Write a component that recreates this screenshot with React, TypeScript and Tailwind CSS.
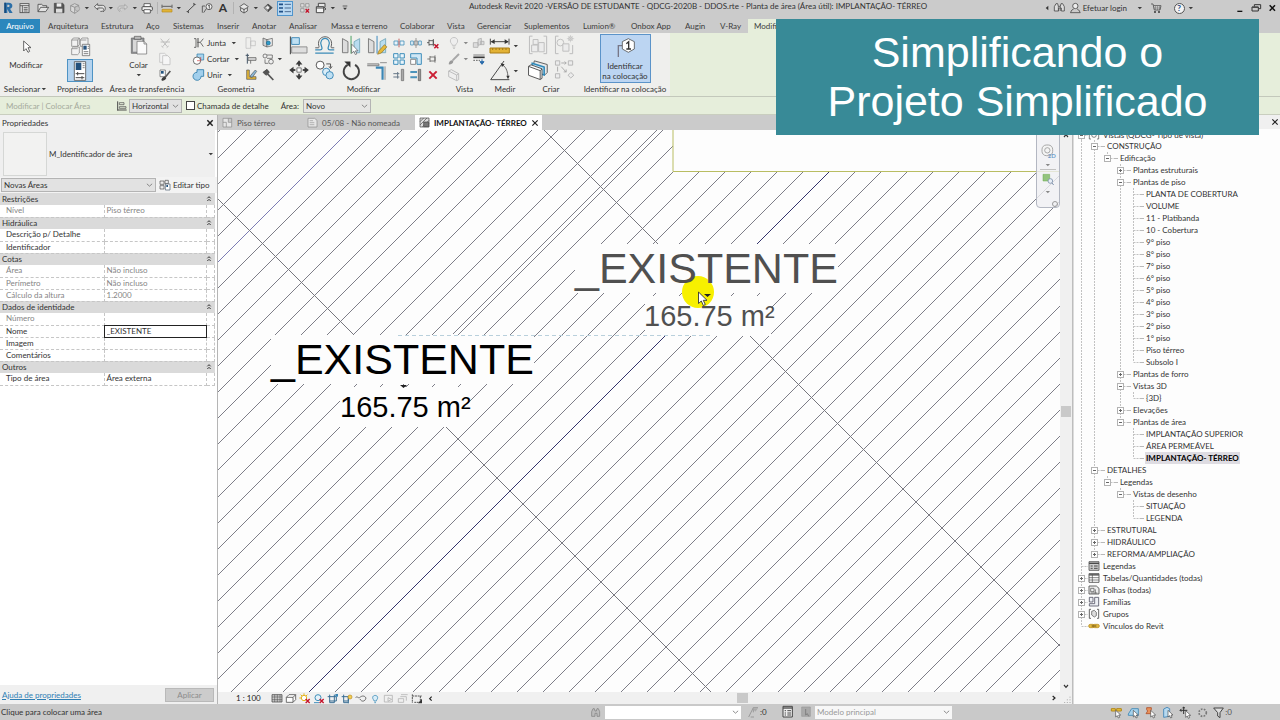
import React from "react";

type Kids = { children?: React.ReactNode };

/* Icon canvas: drawn on a grid three times finer than its pixel size. */
function Ico({ w = 16, h = 16, children }: { w?: number; h?: number } & Kids) {
  return (
    <svg width={w} height={h} viewBox={`0 0 ${w * 3} ${h * 3}`} fill="none" stroke="#4a4a4a" strokeWidth="3" className="block shrink-0" aria-hidden="true">
      {children}
    </svg>
  );
}

function Caret({ light = false }: { light?: boolean }) {
  return (
    <svg width="8" height="8" viewBox="0 0 24 24" className="block shrink-0" aria-hidden="true">
      <path d="M5 9h13l-6.500 7z" fill={light ? "#888" : "#3c3c3c"} />
    </svg>
  );
}

function IconButton({ label, children, className = "" }: { label: string; className?: string } & Kids) {
  return (
    <button type="button" aria-label={label} className={`flex shrink-0 items-center justify-center ${className}`}>
      {children}
    </button>
  );
}

function Chevron() {
  return (
    <svg width="7" height="8" viewBox="0 0 24 24" fill="none" stroke="#666" strokeWidth="2.5" className="pointer-events-none absolute right-[2px] top-1/2 -translate-y-1/2" aria-hidden="true">
      <path d="M3 8l9 8 9-8" />
    </svg>
  );
}

function Combo({ label, value, className = "" }: { label: string; value: string; className?: string }) {
  return (
    <span className={`relative block h-[14px] shrink-0 border border-[#b4b4b4] bg-[#e2e2e2] ${className}`}>
      <select aria-label={label} className="block h-full w-full appearance-none bg-transparent pl-[2px] leading-[12px] outline-none">
        <option>{value}</option>
      </select>
      <Chevron />
    </span>
  );
}

function Close({ bold = false }: { bold?: boolean }) {
  return (
    <Ico w={8} h={8}>
      <path d="M4 4l16 16M20 4L4 20" stroke="#222" strokeWidth={bold ? 4.5 : 3.5} />
    </Ico>
  );
}

/* ---------- Title bar ---------- */

function QuickAccess() {
  return (
    <div className="flex h-full shrink-0 items-center">
      <IconButton label="Revit" className="w-4">
        <Ico>
          <path d="M15 8h11c8 0 11 4 11 9s-3 8-7 9l8 13H28l-6-12v12h-9V8z" fill="#2c6fa8" stroke="none" />
          <path d="M22 14h4c3 0 4 5 0 7h-4z" fill="#cbcbcb" stroke="none" />
          <path d="M13 8h5v31h-5z" fill="#184b7c" stroke="none" />
        </Ico>
      </IconButton>
      <IconButton label="Início" className="w-4">
        <Ico>
          <rect x="12" y="11" width="27" height="27" fill="#e8e8e8" strokeWidth="2.5" />
          <path d="M12 17h27M19 17v21M23 23h12M23 28h12M23 33h12" strokeWidth="2.5" />
        </Ico>
      </IconButton>
      <span className="w-[3px]" />
      <IconButton label="Abrir" className="w-4">
        <Ico>
          <path d="M9 35V13h11l4 4h11v6M9 35l8-13h24l-9 13z" fill="#e2e2e2" strokeWidth="2.5" />
        </Ico>
      </IconButton>
      <IconButton label="Salvar" className="w-4">
        <Ico>
          <path d="M10 10h25l4 4v24H10z" fill="#565656" stroke="#444" strokeWidth="2" />
          <path d="M17 10h14v10H17z" fill="#eee" stroke="none" />
          <path d="M15 26h19v12H15z" fill="#ddd" stroke="none" />
        </Ico>
      </IconButton>
      <IconButton label="Sincronizar" className="w-4">
        <Ico>
          <path d="M11 17l12-6 12 5v16l-12 8-12-7zM11 17l12 5 12-6M23 22v18" fill="#d8d8d8" stroke="#8a8a8a" strokeWidth="2.5" />
          <circle cx="31" cy="26" r="7" fill="#c4c4c4" stroke="#999" strokeWidth="2" />
        </Ico>
      </IconButton>
      <Caret />
      <IconButton label="Desfazer" className="w-4">
        <Ico>
          <path d="M20 11L10 20l10 9v-5h14c5 0 5 8 0 10h-6M20 11v5h14c12 0 11 17 2 19" fill="#e4e4e4" strokeWidth="2.5" />
        </Ico>
      </IconButton>
      <Caret />
      <IconButton label="Refazer" className="w-4">
        <Ico>
          <path d="M29 13l9 8-9 8v-5H18c-5 0-5 7 0 10M29 13v5H17c-11 0-10 14-2 17" fill="#d2d2d2" stroke="#a2a2a2" strokeWidth="2.5" />
        </Ico>
      </IconButton>
      <Caret />
      <IconButton label="Imprimir" className="w-4">
        <Ico>
          <path d="M15 20v-9h19v9" fill="#fff" strokeWidth="2.5" />
          <rect x="9" y="20" width="31" height="12" rx="3" fill="#f0f0f0" strokeWidth="3" />
          <path d="M15 29h19v10H15z" fill="#fff" strokeWidth="2.5" />
        </Ico>
      </IconButton>
      <span className="flex w-1 justify-center"><span className="h-3 w-px bg-[#b2b2b2]" /></span>
      <IconButton label="Medir" className="w-4">
        <Ico>
          <path d="M9 28h30v8H9z" fill="#e0b336" stroke="#b98b1e" strokeWidth="2" />
          <path d="M9 14v10M39 14v10M10 19h28" strokeWidth="2.5" />
        </Ico>
      </IconButton>
      <Caret />
      <IconButton label="Cota alinhada" className="w-4">
        <Ico>
          <path d="M13 35L36 13" strokeWidth="3" />
          <path d="M9 34h9v6zM40 14h-9V8z" fill="#444" stroke="none" />
        </Ico>
      </IconButton>
      <IconButton label="Identificador" className="w-4">
        <Ico>
          <path d="M10 38V18h8" strokeWidth="2.5" />
          <circle cx="30" cy="20" r="9" fill="#eee" strokeWidth="2.5" />
          <path d="M27 18l4-3v11M14 38l8-12" strokeWidth="2.5" />
        </Ico>
      </IconButton>
      <IconButton label="Texto" className="w-4 text-[12px] font-bold leading-4 text-[#333]">A</IconButton>
      <span className="flex w-[5px] justify-center"><span className="h-3 w-px bg-[#b2b2b2]" /></span>
      <IconButton label="Vista 3D" className="w-4">
        <Ico>
          <path d="M11 20l13-9 13 9-3 3v10l-10 6-10-6V23zM14 23l10 6 10-6M24 29v10" fill="#e8e8e8" strokeWidth="2.5" />
        </Ico>
      </IconButton>
      <Caret />
      <IconButton label="Corte" className="w-4">
        <Ico>
          <path d="M12 23l12-11v6h6v10h-6v7z" fill="#f4f4f4" strokeWidth="2.5" />
          <path d="M24 12l13 11-13 12" fill="#444" strokeWidth="2" />
          <circle cx="23" cy="23" r="6" fill="#eee" strokeWidth="2" />
        </Ico>
      </IconButton>
      <span className="w-px" />
      <button type="button" aria-label="Linhas finas" className="flex h-[15px] w-4 shrink-0 items-center justify-center border border-[#4f94cc] bg-[#b9d8f2]">
        <Ico w={14} h={12}>
          <path d="M3 7h12M3 18h12M3 29h12" stroke="#1f4f86" strokeWidth="5" />
          <path d="M20 7h19M20 18h19M20 29h19" strokeWidth="2.5" stroke="#35577f" />
        </Ico>
      </button>
      <span className="w-1" />
      <IconButton label="Fechar janelas inativas" className="w-4">
        <Ico>
          <path d="M11 11h10v10H11zM26 11h10v10H26zM11 26h10v10H11z" fill="#ddd" stroke="#888" strokeWidth="2" />
          <path d="M26 27l10 11M36 27L26 38" stroke="#c4122a" strokeWidth="4" />
        </Ico>
      </IconButton>
      <IconButton label="Alternar janelas" className="w-4">
        <Ico>
          <path d="M16 10h20v12H16z" fill="#e6e6e6" strokeWidth="3" />
          <path d="M10 20h22v18H10z" fill="#f4f4f4" strokeWidth="3" />
          <path d="M10 24h22M34 30l5-3-5-4" strokeWidth="3" />
        </Ico>
      </IconButton>
      <Caret />
      <span className="w-1" />
      <IconButton label="Personalizar" className="w-2">
        <Ico w={8} h={8}>
          <path d="M5 6h14" strokeWidth="2.5" />
          <path d="M6 11h12l-6 7z" fill="#3c3c3c" stroke="none" />
        </Ico>
      </IconButton>
    </div>
  );
}

function TitleBar() {
  return (
    <header className="flex h-[19px] items-start bg-[#cbcbcb] text-[#333]">
      <div className="flex h-4 w-full items-center">
        <QuickAccess />
        <h1 className="min-w-0 flex-1 overflow-hidden pl-[120px] pb-1 whitespace-nowrap">
          Autodesk Revit 2020 -VERSÃO DE ESTUDANTE - QDCG-2020B - DDOS.rte - Planta de área (Área útil): IMPLANTAÇÃO- TÉRREO
        </h1>
        <div className="flex shrink-0 items-center">
          <IconButton label="Recolher" className="w-2">
            <Ico w={8} h={8}><path d="M16 5v14l-8-7z" fill="#333" stroke="none" /></Ico>
          </IconButton>
          <IconButton label="Pesquisar" className="w-4">
            <Ico>
              <path d="M10 33V20l5-9h5l2 8h6l2-8h5l5 9v13h-9v-9h-8v9z" fill="#ddd" strokeWidth="2.5" />
              <path d="M22 19v14M28 19v14" strokeWidth="2" />
            </Ico>
          </IconButton>
          <button type="button" className="flex items-center">
            <Ico>
              <circle cx="25" cy="18" r="8" fill="#eee" strokeWidth="2.5" />
              <path d="M11 38c1-8 7-10 9-11M39 38c-1-8-7-10-9-11M10 38h30" strokeWidth="2.5" />
            </Ico>
            <span>Efetuar login</span>
          </button>
          <span className="w-[9px]" />
          <Caret />
          <span className="w-1" />
          <IconButton label="Loja" className="w-4">
            <Ico>
              <path d="M9 12h6l4 18h17l3-13H17" fill="#e8e8e8" strokeWidth="2.5" />
              <path d="M22 18v12M28 18v12M34 18v12M17 24h20" strokeWidth="1.5" />
              <circle cx="21" cy="36" r="2" fill="#333" /><circle cx="33" cy="36" r="2" fill="#333" />
            </Ico>
          </IconButton>
          <span className="w-[7px]" />
          <IconButton label="Ajuda" className="w-4">
            <span className="flex h-[11px] w-[11px] items-center justify-center rounded-full border border-[#555] bg-[#f2f2f2] font-bold leading-none text-[#1c4587]">?</span>
          </IconButton>
          <Caret />
          <span className="w-[37px]" />
          <IconButton label="Minimizar" className="w-4"><Ico><path d="M16 34h15" stroke="#111" strokeWidth="4" /></Ico></IconButton>
          <IconButton label="Restaurar" className="w-4"><Ico><path d="M19 20v-6h19v12h-6M12 21h19v12H12z" stroke="#333" strokeWidth="3" /><path d="M12 22h19" strokeWidth="4" /></Ico></IconButton>
          <IconButton label="Fechar" className="w-4"><Ico><path d="M17 16l16 16M33 16L17 32" stroke="#111" strokeWidth="4.5" /></Ico></IconButton>
        </div>
      </div>
    </header>
  );
}

/* ---------- Ribbon tabs ---------- */

const TABS: [string, string][] = [
  ["Arquitetura", "w-[53px]"], ["Estrutura", "w-[45px]"], ["Aço", "w-[27px]"], ["Sistemas", "w-[44px]"],
  ["Inserir", "w-[35px]"], ["Anotar", "w-[37px]"], ["Analisar", "w-[42px]"], ["Massa e terreno", "w-[69px]"],
  ["Colaborar", "w-[47px]"], ["Vista", "w-[30px]"], ["Gerenciar", "w-[47px]"], ["Suplementos", "w-[59px]"],
  ["Lumion®", "w-[48px]"], ["Onbox App", "w-[54px]"], ["Augin", "w-[35px]"], ["V-Ray", "w-[28px]"],
];

function RibbonTabs() {
  return (
    <nav className="flex h-[14px] bg-[#cbcbcb] text-[#3c3c3c]">
      <button type="button" className="w-10 shrink-0 bg-[#2b87bd] text-white">Arquivo</button>
      <div className="flex shrink-0 pl-2">
        {TABS.map(([name, w]) => (
          <button key={name} type="button" className={`shrink-0 text-left whitespace-nowrap ${w}`}>{name}</button>
        ))}
      </div>
      <button type="button" className="shrink-0 bg-[#e6eedb] px-[6px] whitespace-nowrap">Modificar | Colocar Área</button>
    </nav>
  );
}

/* ---------- Ribbon ---------- */

function Panel({ title, w, caret = false, children }: { title: string; w: string; caret?: boolean } & Kids) {
  return (
    <section className={`flex h-full shrink-0 flex-col ${w}`}>
      <div className="flex flex-1 justify-center">{children}</div>
      <h2 className="flex h-[14px] items-center justify-center pb-px whitespace-nowrap leading-none">
        {title}{caret && <Caret />}
      </h2>
    </section>
  );
}

function SmallIcon({ label, children }: { label: string } & Kids) {
  return <IconButton label={label} className="h-4 w-[17px]"><Ico w={14} h={14}>{children}</Ico></IconButton>;
}

function BigIcon({ label, children }: { label: string } & Kids) {
  return <IconButton label={label} className="h-[25px] w-[26px]"><Ico w={22} h={22}><g transform="translate(0 -3) scale(0.920)">{children}</g></Ico></IconButton>;
}

function Ribbon() {
  return (
    <div className="flex h-16 border-b border-[#c3c8bb] bg-[#e6eedb] text-[#333]">
      <div className="flex h-full shrink-0 bg-[#efefed]">
        <Panel title="Selecionar" w="w-[52px]" caret>
          <button type="button" className="flex w-full flex-col items-center">
            <Ico w={20} h={26}>
              <path d="M23 24v30l7-7 6 11 5-3-5-11h9z" fill="#fff" strokeWidth="2.5" />
            </Ico>
            <span className="leading-3">Modificar</span>
          </button>
        </Panel>
        <Panel title="Propriedades" w="w-14">
          <div className="flex flex-col items-center">
            <IconButton label="Propriedades de tipo" className="h-[26px] w-[26px]">
              <Ico w={22} h={22}>
                <path d="M8 15l5-6h18v20l-5 5H8zM8 15h18l5-6M26 15v19" fill="#f2f2f2" strokeWidth="2" stroke="#777" />
                <path d="M34 15l5-6h18v20l-5 5H34zM34 15h18" fill="#f2f2f2" strokeWidth="2" stroke="#777" />
                <path d="M8 41l5-5h18v18l-5 5H8zM8 41h18" fill="#f2f2f2" strokeWidth="2" stroke="#777" />
                <path d="M40 28h22v34H40z" fill="#fff" stroke="#555" strokeWidth="2" />
                <path d="M43 32h10v12H43z" fill="#2a557f" stroke="none" />
                <path d="M56 34h4M56 40h4M44 50h14M44 56h14" stroke="#444" strokeWidth="2" />
              </Ico>
            </IconButton>
            <IconButton label="Propriedades" className="h-[23px] w-[26px] border border-[#4e93c4] bg-[#b5d3ee]">
              <Ico w={18} h={20}>
                <path d="M10 2h34v56H10z" fill="#fff" stroke="#555" strokeWidth="2.5" />
                <path d="M14 5h17v22H14z" fill="#22507c" stroke="none" />
                <path d="M35 8h6M35 14h6M35 20h6" strokeWidth="2" />
                <path d="M14 38h26M20 33v10M14 50h26M33 45v10" strokeWidth="3" />
              </Ico>
            </IconButton>
          </div>
        </Panel>
        <Panel title="Área de transferência" w="w-[78px]">
          <button type="button" className="flex w-9 flex-col items-center">
            <Ico w={20} h={26}>
              <path d="M7 15h38v46H7z" fill="#8d8f92" stroke="#666" strokeWidth="2" />
              <path d="M12 20h28v36H12z" fill="#d8d8d8" stroke="none" />
              <path d="M16 10h20v9H16z" fill="#bbb" stroke="#555" strokeWidth="2" />
              <path d="M24 25h21l8 8v30H24z" fill="#fafafa" stroke="#666" strokeWidth="2" />
              <path d="M45 25v8h8" stroke="#666" strokeWidth="2" />
            </Ico>
            <span className="leading-3">Colar</span>
            <Caret />
          </button>
          <div className="flex flex-col pt-[2px]">
            <SmallIcon label="Recortar"><path d="M8 8l20 24M34 8L14 32M8 18h28M10 30l6 5M26 35l6-5" stroke="#b5b5b5" strokeWidth="2.5" /></SmallIcon>
            <SmallIcon label="Copiar"><path d="M5 4h15l7 7v20H5z" fill="#f3f3f3" stroke="#bbb" strokeWidth="2" /><path d="M14 11h15l7 7v20H14z" fill="#f6f6f6" stroke="#b5b5b5" strokeWidth="2" /></SmallIcon>
            <SmallIcon label="Copiar propriedades"><path d="M6 6h16v20H6z" fill="#fff" stroke="#555" strokeWidth="2" /><path d="M9 9h8v8H9z" fill="#23547f" stroke="none" /><path d="M12 36c2-6 8-8 11-10L37 9" stroke="#555" strokeWidth="5" /><path d="M11 38c0-8 6-11 11-11l3 3c-3 6-8 9-14 8z" fill="#3c3c3c" stroke="none" /></SmallIcon>
          </div>
        </Panel>
        <Panel title="Geometria" w="w-[100px]">
          <div className="flex w-full flex-col pl-[6px] pt-[2px]">
            <div className="flex h-4 items-center">
              <button type="button" className="flex w-[46px] items-center">
                <Ico w={14} h={14}><path d="M6 8h6v26H6M34 8l-9 11h-9M25 19l9 13" stroke="#555" strokeWidth="2.5" /><path d="M18 6v28" strokeWidth="3" /></Ico>
                <span className="pl-px">Junta</span><span className="w-1" /><Caret />
              </button>
              <span className="w-1" />
              <SmallIcon label="Adicionar recorte"><path d="M6 5h14v32H6zM20 15h14v14H20z" stroke="#bbb" strokeWidth="2" /></SmallIcon>
              <SmallIcon label="Dividir face"><path d="M6 6l12 5v22L6 28z" fill="#d0d0d0" stroke="#555" strokeWidth="2" /><path d="M18 11l16-4v22l-16 4z" fill="#eee" stroke="#555" strokeWidth="2" /><circle cx="22" cy="21" r="6" fill="#2f9bc8" stroke="#1c6a91" strokeWidth="2" /></SmallIcon>
            </div>
            <div className="flex h-4 items-center">
              <button type="button" className="flex w-[50px] items-center">
                <Ico w={14} h={14}><path d="M15 6h20v18H15z" fill="#a9d4ee" stroke="#2b7aa8" strokeWidth="2" /><circle cx="15" cy="26" r="11" fill="#fff" stroke="#555" strokeWidth="2.5" /><path d="M15 26h11V15" stroke="#c44" strokeWidth="2" /></Ico>
                <span className="pl-px">Cortar</span><span className="w-1" /><Caret />
              </button>
              <SmallIcon label="Vigas"><path d="M12 17h24v8H12zM20 25v10" fill="#ddd" stroke="#666" strokeWidth="2.5" /><path d="M10 5v30M5 10h10" stroke="#456" strokeWidth="3" /></SmallIcon>
              <SmallIcon label="Pintar"><circle cx="12" cy="12" r="6" fill="#eee" strokeWidth="2" /><path d="M18 9h16v10H18M12 22v12h10" strokeWidth="2" /><circle cx="30" cy="29" r="7" fill="#eee" strokeWidth="2" /></SmallIcon>
              <Caret />
            </div>
            <div className="flex h-4 items-center">
              <button type="button" className="flex w-[46px] items-center">
                <Ico w={14} h={14}><path d="M15 5h20v20h-8c0 8-6 12-11 12-8 0-13-6-13-12 0-7 5-12 12-12z" fill="#a2cfec" stroke="#2b7aa8" strokeWidth="2.5" /></Ico>
                <span className="pl-px">Unir</span><span className="w-1" /><Caret />
              </button>
              <span className="w-1" />
              <SmallIcon label="Juntas de parede"><path d="M8 6v28h28v-8H16V6z" fill="#e0b336" stroke="#555" strokeWidth="2" /><path d="M34 6L20 22v6h5L38 10z" fill="#8ab8d8" stroke="#555" strokeWidth="2" /></SmallIcon>
              <SmallIcon label="Demolir"><path d="M6 13L18 4l7 9-10 9z" fill="#555" stroke="#333" strokeWidth="2" /><path d="M19 17l18 19" stroke="#555" strokeWidth="5" /></SmallIcon>
            </div>
          </div>
        </Panel>
        <Panel title="Modificar" w="w-[155px]">
          <div className="grid grid-cols-[repeat(4,26px)] grid-rows-[repeat(2,25px)] content-start">
            <BigIcon label="Alinhar"><path d="M8 8v58" strokeWidth="4" stroke="#555" /><path d="M12 12h25v22H12z" fill="#bfe0f3" stroke="#3a86b5" strokeWidth="3" /><path d="M12 42h50v20H12z" fill="#dedede" stroke="#8a8a8a" strokeWidth="3" /></BigIcon>
            <BigIcon label="Deslocar"><path d="M4 62h60M4 52h16c9 0 6-9 4-14-6-15 4-24 12-24s18 9 12 24c-2 5-5 14 4 14h14" stroke="#3c8cb8" strokeWidth="4" /><path d="M4 45h10c4 0 2-6 1-9-5-36 47-36 42 0-1 4-3 9 1 9h8" stroke="#555" strokeWidth="3" /></BigIcon>
            <BigIcon label="Espelhar - Selecionar eixo"><path d="M8 15l18 10v36H8z" fill="#ddd" stroke="#777" strokeWidth="3" /><path d="M36 6v58" stroke="#3d9b55" strokeWidth="3" /><path d="M64 15L46 25v36h18z" fill="#b9dcef" stroke="#7ab" strokeWidth="3" /><path d="M38 33v30l7-7 5 11 5-2-5-10h9z" fill="#fff" strokeWidth="2" /></BigIcon>
            <BigIcon label="Espelhar - Desenhar eixo"><path d="M8 15l18 10v36H8z" fill="#ddd" stroke="#777" strokeWidth="3" /><path d="M36 6v58" stroke="#2d7fb8" strokeWidth="3" /><path d="M64 15L46 25v36h18z" fill="#b9dcef" stroke="#7ab" strokeWidth="3" /><path d="M38 66l4-11 18-20 8 7-18 20z" fill="#e5b93c" stroke="#8a6a1d" strokeWidth="2" /></BigIcon>
            <BigIcon label="Mover"><path d="M36 24V12M36 48v12M24 36H12M48 36h12" strokeWidth="6" /><path d="M36 4l11 14H25zM36 68l11-14H25zM4 36l14-11v22zM68 36L54 25v22z" fill="#3b3b3b" stroke="none" /><path d="M29 29h14v14H29z" fill="#fff" stroke="#555" strokeWidth="2.5" /></BigIcon>
            <BigIcon label="Copiar"><circle cx="20" cy="20" r="13" fill="#fff" strokeWidth="3" /><path d="M40 16h14v12M49 24l5 7 5-7" strokeWidth="3" /><circle cx="40" cy="42" r="12" fill="#d9edf8" stroke="#3a86b5" strokeWidth="3" /><circle cx="51" cy="53" r="12" fill="#bfe0f3" stroke="#3a86b5" strokeWidth="3" /></BigIcon>
            <BigIcon label="Rotacionar"><path d="M25 19a25 25 0 1 0 24 0" stroke="#444" strokeWidth="6" /><path d="M14 8h20v20z" fill="#333" stroke="none" /></BigIcon>
            <BigIcon label="Aparar/Estender"><path d="M4 16h38v6H4" stroke="#777" fill="#ddd" strokeWidth="3" /><path d="M32 28h22v40" stroke="#3a86b5" strokeWidth="7" /><path d="M62 24v44M46 12h22" stroke="#888" strokeWidth="3" /></BigIcon>
          </div>
          <div className="grid grid-cols-[repeat(3,17px)] grid-rows-[repeat(3,16px)] content-start pt-[2px]">
            <SmallIcon label="Dividir"><path d="M6 15h12v12H6zM24 15h12v12H24z" fill="#e8f3fa" stroke="#4b93bb" strokeWidth="2.5" /><path d="M21 8v26" stroke="#b44" strokeWidth="2.5" /></SmallIcon>
            <SmallIcon label="Dividir com folga"><path d="M5 15h8v12H5zM29 15h8v12h-8z" fill="#e8f3fa" stroke="#4b93bb" strokeWidth="2.5" /><path d="M21 6v30M16 15h10v12H16z" strokeWidth="2.5" stroke="#888" /></SmallIcon>
            <SmallIcon label="Desafixar"><path d="M9 11v18M9 20H3M9 14h13v12H9M22 9v22" strokeWidth="2.5" /><path d="M25 25l12 12M37 25L25 37" stroke="#c4122a" strokeWidth="4.5" /></SmallIcon>
            <SmallIcon label="Matriz"><path d="M5 5h13v13H5zM24 5h13v13H24zM5 24h13v13H5zM24 24h13v13H24z" fill="#eaf5fb" stroke="#3f8fbb" strokeWidth="3" /></SmallIcon>
            <SmallIcon label="Escala"><path d="M5 5h32v32H24V18H5z" fill="#cfe7f5" stroke="#3f8fbb" strokeWidth="3" /><path d="M5 22h15v15H5z" fill="#fff" stroke="#777" strokeWidth="2.5" /></SmallIcon>
            <SmallIcon label="Fixar"><path d="M12 12v18M12 21H4M12 15h15v12H12M27 10v22" strokeWidth="2.5" stroke="#666" /></SmallIcon>
            <SmallIcon label="Aparar único"><path d="M4 17h18M4 27h18M17 12v20" strokeWidth="3" stroke="#678" /><path d="M28 4h7v34h-7z" fill="#aaa" stroke="#666" strokeWidth="2" /></SmallIcon>
            <SmallIcon label="Aparar múltiplos"><path d="M4 12h20M4 28h20" strokeWidth="6" stroke="#4b93bb" /><path d="M28 4h7v34h-7z" fill="#999" stroke="#555" strokeWidth="2" /></SmallIcon>
            <SmallIcon label="Excluir"><path d="M10 10l22 22M32 10L10 32" stroke="#cb1f34" strokeWidth="6" /></SmallIcon>
          </div>
        </Panel>
        <Panel title="Vista" w="w-[47px]">
          <div className="flex w-full flex-col pl-1 pt-[2px]">
            <div className="flex h-4 items-center">
              <SmallIcon label="Ocultar"><path d="M16 28c0-5-6-6-6-13 0-14 22-14 22 0 0 7-6 8-6 13zM17 33h8M18 37h6" fill="#eee" stroke="#bdbdbd" strokeWidth="2.5" /></SmallIcon>
              <Caret light />
              <SmallIcon label="Deslocar elementos"><path d="M4 20h14v14H4zM18 10l10-3v18l-10 3zM26 16h10v10H26z" fill="#ddd" stroke="#b0b0b0" strokeWidth="2.5" /></SmallIcon>
            </div>
            <div className="flex h-4 items-center">
              <SmallIcon label="Substituir gráficos"><path d="M17 25L36 6" stroke="#a8a8a8" strokeWidth="6" /><path d="M5 37c1-9 6-13 12-12l2 4c-2 6-8 9-14 8z" fill="#999" stroke="none" /></SmallIcon>
              <Caret light />
              <SmallIcon label="Trabalho de linha"><path d="M4 9h34" strokeWidth="2" /><path d="M4 16h34" strokeWidth="5" stroke="#333" /><path d="M4 25h20" strokeDasharray="5 3" strokeWidth="2.5" /><path d="M30 22v10M24 29l6 8 6-8z" stroke="#2b6cab" fill="#2b6cab" strokeWidth="3" /></SmallIcon>
            </div>
            <SmallIcon label="Caixa de seleção"><path d="M5 9l8-4 22 12v18l-6 3L5 26zM5 9l24 12v17M29 21l6-4" fill="#eee" stroke="#b5b5b5" strokeWidth="2.5" /></SmallIcon>
          </div>
        </Panel>
        <Panel title="Medir" w="w-[34px]">
          <div className="flex w-full flex-col">
            <button type="button" aria-label="Medir distância" className="flex h-[25px] items-center">
              <Ico w={24} h={24}><path d="M7 14v18M63 14v18M10 23h50" strokeWidth="3" /><path d="M8 23l12-7v14zM62 23l-12-7v14z" fill="#333" stroke="none" /><path d="M6 42h58v15H6z" fill="#e3b234" stroke="#a97d16" strokeWidth="3" /><path d="M14 43v5M24 43v5M34 43v5M44 43v5M54 43v5" stroke="#7a5a10" strokeWidth="2" /></Ico>
              <Caret />
            </button>
            <button type="button" aria-label="Cota angular" className="flex h-[25px] items-center">
              <Ico w={24} h={24}><path d="M48 6L8 62h56" strokeWidth="3" /><path d="M44 18c12 8 15 22 16 36" strokeWidth="2.500" /><path d="M38 13l12 3-8 8zM60 61l-5-11h10z" fill="#333" stroke="none" /></Ico>
              <Caret />
            </button>
          </div>
        </Panel>
        <Panel title="Criar" w="w-[58px]">
          <div className="grid grid-cols-[repeat(2,26px)] grid-rows-[repeat(2,25px)] content-start">
            <BigIcon label="Criar montagem"><path d="M18 7H8v57h10M54 7h10v57H54" stroke="#b9b9b9" strokeWidth="3" /><path d="M20 18h16v16H20zM15 36h20v22H15zM38 28h18v30H38z" fill="#ececec" stroke="#bdbdbd" strokeWidth="3" /></BigIcon>
            <BigIcon label="Criar peças"><path d="M18 7H8v57h10M54 64h10V36" stroke="#b9b9b9" strokeWidth="3" /><circle cx="24" cy="28" r="11" stroke="#bdbdbd" strokeWidth="3" /><path d="M32 32h20v24H32z" fill="#ececec" stroke="#bdbdbd" strokeWidth="3" /><circle cx="57" cy="15" r="6" stroke="#bbb" strokeWidth="3" /><path d="M57 3v24M45 15h24M49 7l16 16M65 7L49 23" stroke="#c4c4c4" strokeWidth="2" /></BigIcon>
            <BigIcon label="Criar grupo"><path d="M24 6l42 12v26l-8 8-42-14z" fill="#e8e8e8" stroke="#555" strokeWidth="3" /><path d="M17 14l39 12v26L14 40z" fill="#bfe0f3" stroke="#2e88b8" strokeWidth="5" /><path d="M5 24l8-5 36 13v31l-6 4L5 53z" fill="#fff" stroke="#4a4a4a" strokeWidth="3" /><path d="M5 24l38 14v28M43 38l6-5" strokeWidth="3" /></BigIcon>
            <BigIcon label="Criar similar"><path d="M8 6h14v14H8zM50 6h14v14H50zM8 48h14v14H8zM58 44l10 9-10 9-9-9z" fill="#ececec" stroke="#b4b4b4" strokeWidth="3" /><path d="M27 13h16M38 8l5 5-5 5M15 25v16M27 25l16 18M35 42h8v-8" stroke="#a8a8a8" strokeWidth="3" /></BigIcon>
          </div>
        </Panel>
        <Panel title="Identificar na colocação" w="w-[90px]">
          <button type="button" aria-pressed="true" className="mt-px flex h-[49px] w-[51px] flex-col items-center border border-[#5b93c9] bg-[#bcd5f2]">
            <Ico w={24} h={26}>
              <path d="M16 66V32h12" strokeWidth="4" stroke="#778" />
              <path d="M46 11l18 9v22L46 52 28 42V20z" fill="#fff" stroke="#555" strokeWidth="2.500" />
              <path d="M40 26l7-6v22M40 42h14" stroke="#333" strokeWidth="4" />
            </Ico>
            <span className="leading-[10px]">Identificar<br />na colocação</span>
          </button>
        </Panel>
      </div>
    </div>
  );
}

function OptionsBar() {
  return (
    <div className="flex h-[18px] items-center border-b border-[#c9cebf] bg-[#e6eedb] text-[#333]">
      <span className="w-[116px] shrink-0 pl-[6px] whitespace-nowrap text-[#a5aa9c]">Modificar | Colocar Área</span>
      <Ico w={12} h={12}><path d="M5 4v28M5 30h27" strokeWidth="3" /><path d="M10 8h14v6H10zM10 20h20v5H10z" strokeWidth="2" /></Ico>
      <span className="w-px" />
      <Combo label="Orientação" value="Horizontal" className="w-[53px]" />
      <label className="flex items-center gap-[2px] pl-1">
        <input type="checkbox" className="h-[9px] w-[9px] appearance-none border border-[#444] bg-white" />
        Chamada de detalhe
      </label>
      <label htmlFor="area" className="pl-3">Área:</label>
      <span className="relative ml-1 block h-[14px] w-[68px] shrink-0 border border-[#b4b4b4] bg-[#e6e6e4]">
        <select id="area" className="block h-full w-full appearance-none bg-transparent pl-[2px] leading-[12px] outline-none">
          <option>Novo</option>
        </select>
        <Chevron />
      </span>
    </div>
  );
}

/* ---------- Properties ---------- */

type Group = { title: string; rows: { name: string; value?: string; off?: boolean; edit?: boolean }[] };

const GROUPS: Group[] = [
  { title: "Restrições", rows: [{ name: "Nível", value: "Piso térreo", off: true }] },
  { title: "Hidráulica", rows: [{ name: "Descrição p/ Detalhe" }, { name: "Identificador" }] },
  { title: "Cotas", rows: [
    { name: "Área", value: "Não incluso", off: true },
    { name: "Perímetro", value: "Não incluso", off: true },
    { name: "Cálculo da altura", value: "1.2000", off: true },
  ] },
  { title: "Dados de identidade", rows: [
    { name: "Número", off: true },
    { name: "Nome", value: "_EXISTENTE", edit: true },
    { name: "Imagem" },
    { name: "Comentários" },
  ] },
  { title: "Outros", rows: [{ name: "Tipo de área", value: "Área externa" }] },
];

function Properties() {
  return (
    <aside className="flex w-[218px] shrink-0 flex-col border-r border-[#b5b5b5] bg-white text-[#333]">
      <div className="flex h-[15px] shrink-0 items-center justify-between bg-[#f0f0f0] pl-[2px] pr-[3px]">
        <h2>Propriedades</h2>
        <IconButton label="Fechar propriedades"><Close bold /></IconButton>
      </div>
      <button type="button" className="mr-[2px] flex h-[47px] shrink-0 items-center bg-[#efefef] pl-[3px] text-left">
        <span className="h-[44px] w-[44px] border border-[#d5d7d5] bg-[#f2f2f1]" />
        <span className="flex-1 pl-[2px]">M_Identificador de área</span>
        <Caret />
      </button>
      <div className="flex h-4 shrink-0 items-center bg-[#f3f3f3] pl-px">
        <Combo label="Seleção" value="Novas Áreas" className="w-[155px]" />
        <button type="button" className="flex items-center gap-[2px] pl-[3px]">
          <Ico w={12} h={12}>
            <path d="M3 6h12v10H3zM18 4h10v10H18zM3 20h12v10H3z" fill="#eee" strokeWidth="2" />
            <path d="M19 15h14v18H19z" fill="#fff" stroke="#456" strokeWidth="2" />
            <path d="M22 18h5v6h-5z" fill="#23547f" stroke="none" />
          </Ico>
          Editar tipo
        </button>
      </div>
      <table className="mr-[2px] table-fixed border-collapse">
        <colgroup><col className="w-[104px]" /><col className="w-[102px]" /><col /></colgroup>
        {GROUPS.map((g) => (
          <tbody key={g.title}>
            <tr className="h-3 bg-[#dadada]">
              <th colSpan={2} className="h-3 p-0 pl-[2px] text-left font-normal leading-[11px]">{g.title}</th>
              <td className="h-3 p-0">
                <Ico w={7} h={10}><path d="M4 13l5-5 5 5M4 21l5-5 5 5" strokeWidth="3" stroke="#333" /></Ico>
              </td>
            </tr>
            {g.rows.map((r) => (
              <tr key={r.name} className={`h-3 ${r.off ? "text-[#858585]" : ""}`}>
                <td className="h-3 overflow-hidden border-b border-r border-dashed border-[#c6c6c6] p-0 pl-[6px] leading-[11px] whitespace-nowrap">{r.name}</td>
                <td className="h-3 border-b border-r border-dashed border-[#c6c6c6] p-0 leading-[11px]">
                  {r.edit ? (
                    <input aria-label={r.name} defaultValue={r.value} className="block h-[11px] w-full bg-white p-0 pl-[2px] leading-[11px] outline outline-1 outline-[#222]" />
                  ) : (
                    <span className="pl-[2px]">{r.value}</span>
                  )}
                </td>
                <td className="h-3 border-b border-r border-dashed border-[#c6c6c6] p-0" />
              </tr>
            ))}
          </tbody>
        ))}
      </table>
      <div className="flex-1" />
      <div className="flex h-[19px] shrink-0 items-center justify-between bg-[#f0f0f0] pl-[2px] pr-[3px]">
        <a href="#ajuda" className="text-[#2f7fb5] underline">Ajuda de propriedades</a>
        <button type="button" disabled className="h-[14px] w-[49px] border border-[#b9b9b9] bg-[#cccccc] text-[#8b8b8b]">Aplicar</button>
      </div>
    </aside>
  );
}

/* ---------- Drawing view ---------- */

function ViewTabs() {
  return (
    <div className="flex h-[15px] shrink-0 items-center bg-[#cbcbcb] text-[#555]">
      <button type="button" className="flex w-[83px] items-center gap-1 pl-1">
        <Ico w={11} h={11}><path d="M3 4h16v12h10v14H3z" fill="#e6e6e6" stroke="#888" strokeWidth="2" /><path d="M3 16h10v14M19 4h10v12" stroke="#888" strokeWidth="2" /></Ico>
        Piso térreo
      </button>
      <button type="button" className="flex w-[114px] items-center gap-1 pl-[6px]">
        <Ico w={11} h={11}><path d="M3 4h20l7 6v20H3z" fill="#e6e6e6" stroke="#888" strokeWidth="2" /><path d="M8 11h10M8 17h14M8 23h14" stroke="#999" strokeWidth="2" /></Ico>
        05/08 - Não nomeada
      </button>
      <div className="flex h-full items-center bg-white pl-1 pr-[3px] text-[#111]">
        <button type="button" className="flex items-center gap-1 font-bold whitespace-nowrap">
          <Ico w={11} h={11}><path d="M3 3h27v27H3z" fill="#ddd" stroke="#444" strokeWidth="2" /><path d="M3 14L14 3M3 24L24 3M10 30L30 10M19 30l11-11" strokeWidth="2" /><path d="M14 15h15v14H14z" fill="#777" stroke="#444" strokeWidth="2" /></Ico>
          IMPLANTAÇÃO- TÉRREO
        </button>
        <span className="w-1" />
        <IconButton label="Fechar vista"><Close /></IconButton>
      </div>
    </div>
  );
}

const HATCH_STEP = 26.04;
const DARK_LINE = 24;
const HATCH = Array.from({ length: 72 }, (_, i) => Math.round(376 + (i - 1) * HATCH_STEP));

function AreaTag({ x, y, color }: { x: number; y: number; color: string }) {
  return (
    <g fill={color} stroke="none" style={{ fontFamily: '"Liberation Sans", Arial, sans-serif' }}>
      <text x={x} y={y} fontSize="43">_EXISTENTE</text>
      <text x={x + 69} y={y + 43} fontSize="29">165.75 m²</text>
    </g>
  );
}

function Drawing() {
  return (
    <div className="relative min-h-0 min-w-0 flex-1 overflow-hidden bg-[#fdfdfd]">
      <svg className="absolute inset-0 h-full w-full" role="img" aria-label="Planta de área">
        <g transform="translate(-218 -130)" fill="none">
          <g stroke="#7e7e88" strokeWidth="1" shapeRendering="crispEdges">
            {HATCH.map((c, i) => (
              <path key={c} d={`M${c - 100} 100L${c - 1000} 1000`} stroke={i === DARK_LINE + 1 ? "#34346c" : i === 5 ? "#7c7cb4" : undefined} />
            ))}
            <path d="M453 334L660 127" />
            <path d="M180 161L1180 1161M500 86L1500 1086" stroke="#77777e" />
          </g>
          <path d="M673 100h1200v71.500H673z" fill="#fdfdfd" stroke="#b9bd62" strokeWidth="1" />
          <g fill="#fdfdfd">
            <rect x="271" y="335" width="263" height="49" />
            <rect x="340" y="387" width="128" height="40" />
            <rect x="575" y="244" width="263" height="49" />
            <rect x="645" y="296" width="126" height="40" />
          </g>
          <path d="M398 335.500H713" stroke="#b9d0dc" strokeDasharray="4 3" />
          <circle cx="698" cy="292" r="16" fill="#f7f000" />
          <AreaTag x={271} y={374} color="#000" />
          <AreaTag x={575} y={283} color="#505050" />
          <path d="M400 385h7l-3.500 3zM704 294h7l-3.500 3z" fill="#222" />
          <path d="M698.500 292v11.500l2.800-2.500 2 4.500 2-1-2-4.200h3.700z" fill="#fff" stroke="#333" strokeWidth="0.900" />
        </g>
      </svg>
      <div className="absolute right-0 top-0 flex h-[78px] w-6 flex-col items-center rounded-b border border-[#b3b7c2] bg-[#efeff2]/80 pt-3">
        <IconButton label="Roda de navegação 2D" className="h-[18px]">
          <Ico w={18} h={18}>
            <rect x="9" y="6" width="32" height="32" rx="13" fill="#f4f4f4" stroke="#999" strokeWidth="2.500" />
            <circle cx="25" cy="22" r="8" stroke="#999" strokeWidth="2.500" />
            <text x="26" y="46" fontSize="18" fontWeight="bold" fill="#6d9cc8" stroke="none">2D</text>
          </Ico>
        </IconButton>
        <Caret light />
        <span className="h-px w-4 bg-[#c2c2c2]" />
        <IconButton label="Zoom na região" className="h-[18px]">
          <Ico w={16} h={16}>
            <path d="M9 10h20v20H9z" fill="#93c47d" stroke="#6aa84f" strokeWidth="1.500" />
            <circle cx="31" cy="30" r="7" fill="#e8eef6" stroke="#7f93ad" strokeWidth="2.500" />
            <path d="M36 36l5 6" stroke="#7f93ad" />
          </Ico>
        </IconButton>
        <Caret light />
        <span className="mr-px mt-auto h-[6px] w-[6px] self-end rounded-full border border-[#999]" />
      </div>
    </div>
  );
}

function SmallView({ label, children }: { label: string } & Kids) {
  return <IconButton label={label} className="w-[14px]"><Ico w={12} h={11}>{children}</Ico></IconButton>;
}

function ViewControls() {
  return (
    <div className="flex h-3 shrink-0 items-center bg-[#f0f0f0]">
      <button type="button" className="w-[52px] pl-[18px] text-left whitespace-nowrap text-[#222]">1 : 100</button>
      <div className="flex">
        <SmallView label="Nível de detalhe"><path d="M3 5h30v22H3z" fill="#ccc" stroke="#333" strokeWidth="2" /><path d="M3 12h30M3 20h30M11 5v22M19 5v22M27 5v22" stroke="#444" strokeWidth="1.500" /></SmallView>
        <SmallView label="Estilo visual"><path d="M4 13h20v15H4zM4 13l8-8h20l-8 8M32 5v15l-8 8" fill="#fff" stroke="#555" strokeWidth="2.500" /></SmallView>
        <SmallView label="Caminho do sol"><circle cx="15" cy="15" r="8" fill="#fff" stroke="#e5b41e" strokeWidth="3" /><path d="M15 1v5M1 15h5M5 5l4 4M25 5l-4 4" stroke="#e5b41e" /><path d="M20 18l12 12M32 18L20 30" stroke="#c4122a" strokeWidth="4" /></SmallView>
        <SmallView label="Sombras"><circle cx="15" cy="14" r="9" fill="#e5f2fa" stroke="#3f8fbb" strokeWidth="3" /><path d="M3 29h16" stroke="#3f8fbb" /><path d="M20 18l12 12M32 18L20 30" stroke="#c4122a" strokeWidth="4" /></SmallView>
        <SmallView label="Recortar vista"><path d="M2 11h26v13H8M8 5v24h14M22 5v24" stroke="#3a6e93" strokeWidth="3" /><path d="M25 3h8v8h-8z" fill="#3a86b5" stroke="none" /></SmallView>
        <SmallView label="Mostrar recorte"><path d="M2 11h20v13H8M8 5v24h14M22 11v20" stroke="#3a6e93" strokeWidth="3" /><circle cx="27" cy="12" r="6" fill="#f3cf52" stroke="#b98b1e" strokeWidth="2" /></SmallView>
        <SmallView label="Ocultar temporariamente"><path d="M2 14c4-7 8 4 13-1s14-6 18 2c-3 12-14 12-18 3" stroke="#555" strokeWidth="2.500" /></SmallView>
        <SmallView label="Revelar elementos"><path d="M15 24c0-4-4-5-4-10 0-9 15-9 15 0 0 5-4 6-4 10zM16 29h5" fill="#d9edf8" stroke="#3f8fbb" strokeWidth="2.500" /></SmallView>
        <SmallView label="Propriedades temporárias"><path d="M4 7h24v20H4zM15 14l11 5-11 6z" stroke="#b5b5b5" strokeWidth="2.500" /></SmallView>
        <SmallView label="Modelo analítico"><path d="M4 17h16v11H4zM10 11h18v12M12 5h20" stroke="#b5b5b5" strokeWidth="2.500" /></SmallView>
        <SmallView label="Restrições"><path d="M4 4v26M4 9h28M28 9v19H10" stroke="#555" strokeWidth="3" strokeDasharray="6 2" /><path d="M33 17v14H21z" fill="#333" stroke="none" /></SmallView>
        <SmallView label="Recolher"><path d="M20 11l-6 6 6 6" stroke="#222" strokeWidth="3.500" /></SmallView>
      </div>
      <div className="flex flex-1 items-center">
        <span className="ml-[299px] h-[10px] w-[11px] bg-[#c9c9c9]" />
      </div>
      <Ico w={12} h={12}><path d="M14 12l7 6-7 6" stroke="#222" strokeWidth="3.500" /></Ico>
      <Ico w={12} h={12}><path d="M30 14v3M30 22v3M30 30v3M22 22v3M22 30v3M14 30v3" stroke="#aaa" /></Ico>
    </div>
  );
}

function View() {
  return (
    <main className="flex min-w-0 flex-1 flex-col">
      <ViewTabs />
      <div className="flex min-h-0 flex-1">
        <Drawing />
        <div className="flex w-3 shrink-0 flex-col items-center bg-[#f0f0f0]">
          <Ico w={12} h={12}><path d="M12 21l6-7 6 7" stroke="#333" strokeWidth="3.500" /></Ico>
          <span className="flex-1" />
          <span className="h-[11px] w-[10px] bg-[#c9c9c9]" />
          <span className="flex-1" />
          <Ico w={12} h={12}><path d="M12 15l6 7 6-7" stroke="#333" strokeWidth="3.500" /></Ico>
        </div>
      </div>
      <ViewControls />
    </main>
  );
}

/* ---------- Project browser ---------- */

/* Guide cells: "|" line through, "t" branch, "l" last branch,
   "+" / "-" expander mid-list, "p" / "m" expander at the end of a list. */
const TREE: [string, string, string?][] = [
  ["-", "Vistas (QDCG- Tipo de vista)", "views"],
  ["|-", "CONSTRUÇÃO"],
  ["||m", "Edificação"],
  ["|| +", "Plantas estruturais"],
  ["|| -", "Plantas de piso"],
  ["|| |t", "PLANTA DE COBERTURA"],
  ["|| |t", "VOLUME"],
  ["|| |t", "11 - Platibanda"],
  ["|| |t", "10 - Cobertura"],
  ["|| |t", "9° piso"],
  ["|| |t", "8° piso"],
  ["|| |t", "7° piso"],
  ["|| |t", "6° piso"],
  ["|| |t", "5° piso"],
  ["|| |t", "4° piso"],
  ["|| |t", "3° piso"],
  ["|| |t", "2° piso"],
  ["|| |t", "1° piso"],
  ["|| |t", "Piso térreo"],
  ["|| |l", "Subsolo I"],
  ["|| +", "Plantas de forro"],
  ["|| -", "Vistas 3D"],
  ["|| |l", "{3D}"],
  ["|| +", "Elevações"],
  ["|| m", "Plantas de área"],
  ["||  t", "IMPLANTAÇÃO SUPERIOR"],
  ["||  t", "ÁREA PERMEÁVEL"],
  ["||  l", "IMPLANTAÇÃO- TÉRREO", "selected"],
  ["|-", "DETALHES"],
  ["||m", "Legendas"],
  ["|| m", "Vistas de desenho"],
  ["||  t", "SITUAÇÃO"],
  ["||  l", "LEGENDA"],
  ["|+", "ESTRUTURAL"],
  ["|+", "HIDRÁULICO"],
  ["|p", "REFORMA/AMPLIAÇÃO"],
  ["t", "Legendas", "legend"],
  ["+", "Tabelas/Quantidades (todas)", "table"],
  ["+", "Folhas (todas)", "sheet"],
  ["+", "Famílias", "family"],
  ["+", "Grupos", "group"],
  ["l", "Vínculos do Revit", "link"],
];

function Guide({ kind }: { kind: string }) {
  const box = "+-pm".includes(kind);
  const ends = "lpm".includes(kind);
  return (
    <svg width="13" height="12" className="block shrink-0" fill="none" stroke="#c2c2c2" strokeDasharray="2 1" aria-hidden="true">
      {kind !== " " && <path d={ends ? "M6.500 0v6" : "M6.500 0v12"} />}
      {kind !== " " && kind !== "|" && <path d="M6.500 6.500H13" />}
      {box && (
        <g strokeDasharray="none">
          <rect x="3.500" y="3.500" width="6" height="6" fill="#fff" stroke="#b2b2b2" />
          <path d={kind === "+" || kind === "p" ? "M5 6.500h3M6.500 5v3" : "M5 6.500h3"} stroke="#666" />
        </g>
      )}
    </svg>
  );
}

function TreeIcon({ kind }: { kind: string }) {
  return (
    <Ico w={12} h={12}>
      {kind === "views" && <path d="M9 6H4v24h5M27 6h5v24h-5M11 18a7 7 0 1 0 14 0a7 7 0 1 0-14 0" strokeWidth="2" />}
      {kind === "legend" && <><path d="M3 5h30v26H3z" fill="#ccc" stroke="#555" strokeWidth="2.500" /><path d="M3 10h30" strokeWidth="4" /><path d="M8 18h6M8 25h6M18 18h11M18 25h11" strokeWidth="3" /></>}
      {kind === "table" && <><path d="M3 5h30v26H3z" fill="#fff" strokeWidth="2.500" /><path d="M3 8h30" strokeWidth="6" stroke="#666" /><path d="M3 17h30M3 24h30M13 8v23" strokeWidth="2" /></>}
      {kind === "sheet" && <><path d="M3 6h22l8 7v17H3z" fill="#eee" strokeWidth="2.500" /><path d="M8 13h10v10H8zM22 16v12M8 27h20" strokeWidth="2" /></>}
      {kind === "family" && <path d="M4 4h11v14H4zM20 4h12v26H4v-7h16z" fill="#eef0f5" strokeWidth="2.500" stroke="#556" />}
      {kind === "group" && <><path d="M9 4H4v27h5M27 4h5v27h-5" strokeWidth="2.500" /><path d="M11 10l8-3 6 6v10l-6 4-8-6z" fill="#ddd" strokeWidth="2" /></>}
      {kind === "link" && <><rect x="2" y="13" width="18" height="10" rx="5" fill="#e2b93f" stroke="#b98f2a" strokeWidth="2.500" /><rect x="15" y="13" width="19" height="10" rx="5" fill="#e2b93f" stroke="#b98f2a" strokeWidth="2.500" /><path d="M11 18h14" stroke="#6b5010" /></>}
    </Ico>
  );
}

function Browser() {
  return (
    <aside className="flex w-[208px] shrink-0 flex-col border-l border-[#bdbdbd] bg-[#fdfdfd] text-[#333]">
      <div className="flex h-[14px] shrink-0 items-center justify-end bg-[#f0f0f0] pr-px">
        <IconButton label="Fechar navegador"><Close /></IconButton>
      </div>
      <ul className="flex min-h-0 flex-1 flex-col justify-start overflow-hidden border-l border-[#dcdcdc] pl-px">
        {TREE.map(([guides, name, kind], i) => (
          <li key={i} className={`flex shrink-0 items-center whitespace-nowrap leading-3 ${i === 0 ? "h-[11px]" : "h-3"}`}>
            {guides.split("").map((g, k) => <Guide key={k} kind={g} />)}
            {kind && kind !== "selected" ? <TreeIcon kind={kind} /> : <span className="mr-px w-1 border-t border-dashed border-[#b9b9b9]" />}
            <span className={kind === "selected" ? "bg-[#dedce2] px-px font-bold text-black" : kind ? "pl-[3px]" : "pl-px"}>{name}</span>
          </li>
        ))}
      </ul>
    </aside>
  );
}

/* ---------- Status bar ---------- */

function StatusIcon({ label, children }: { label: string } & Kids) {
  return <IconButton label={label} className="w-[17px]"><Ico w={13} h={13}>{children}</Ico></IconButton>;
}

function StatusBar() {
  return (
    <footer className="flex h-4 shrink-0 items-center bg-[#c9c9c9] text-[#333]">
      <p className="w-[587px] shrink-0 pl-px">Clique para colocar uma área</p>
      <Ico w={18} h={14}><path d="M14 34V20l4-9h4l2 7h4l2-7h4l4 9v14h-8v-9h-6v9z" fill="#bbb" stroke="#888" strokeWidth="2.500" /></Ico>
      <span className="relative block h-[13px] w-[136px] shrink-0 bg-white">
        <select aria-label="Conjunto de trabalho" className="block h-full w-full appearance-none bg-transparent outline-none"><option /></select>
        <Chevron />
      </span>
      <span className="w-[5px]" />
      <Ico w={14} h={14}><path d="M8 36L22 8h14M14 36h10M22 8v14" stroke="#999" strokeWidth="3" /><path d="M20 10h16l-8 10z" fill="#aaa" stroke="none" /></Ico>
      <span className="w-[21px]">:0</span>
      <Ico w={14} h={14}><path d="M6 4h28v32H6z" fill="#eee" stroke="#444" strokeWidth="3" /><path d="M6 9h28" strokeWidth="4" /><path d="M11 17h4M11 24h4M11 30h4M19 17h11M19 24h11M19 30h11" strokeWidth="3" /></Ico>
      <span className="w-1" />
      <Ico w={16} h={14}><path d="M8 6h26v28H8z" fill="#a9a9a9" stroke="#999" strokeWidth="2" /><path d="M20 12v18l5-4 4 8" stroke="#777" strokeWidth="2.500" /></Ico>
      <span className="relative block h-[13px] w-[137px] shrink-0 bg-[#f7f7f7] text-[#999]">
        <select aria-label="Opção de projeto" className="block h-full w-full appearance-none bg-transparent pl-[2px] leading-[13px] outline-none"><option>Modelo principal</option></select>
        <Chevron />
      </span>
      <span className="flex-1" />
      <div className="flex shrink-0 items-center pr-12">
        <StatusIcon label="Selecionar vínculos"><path d="M4 8h12v7H4zM20 8h14v7H20z" fill="#e8c43c" stroke="#b3861a" strokeWidth="3" /><path d="M17 13v20l5-4 3 7 4-2-3-7h6z" fill="#fff" strokeWidth="2" /></StatusIcon>
        <StatusIcon label="Selecionar subjacentes"><path d="M4 24L14 8h20v20H4z" fill="#a6d2ec" stroke="#3a86b5" strokeWidth="2.500" /><path d="M19 13v20l5-4 3 7 4-2-3-7h6z" fill="#fff" strokeWidth="2" /></StatusIcon>
        <StatusIcon label="Selecionar fixados"><path d="M8 5h14v6l-3 4 5 8H6l5-8-3-4z" fill="#e9915a" stroke="#b1502a" strokeWidth="2.500" /><path d="M20 13v20l5-4 3 7 4-2-3-7h6z" fill="#fff" strokeWidth="2" /></StatusIcon>
        <StatusIcon label="Selecionar por face"><path d="M8 9l10-5 8 4v23l-18 3z" fill="#b7daf0" stroke="#3a7fb5" strokeWidth="2.500" /><path d="M21 13v20l5-4 3 7 4-2-3-7h6z" fill="#fff" strokeWidth="2" /></StatusIcon>
        <span className="w-px" />
        <StatusIcon label="Arrastar na seleção"><path d="M14 3v21M3 13h22M10 7l4-4 4 4M7 9l-4 4 4 4" strokeWidth="3" stroke="#333" /><path d="M20 14v20l5-4 3 7 4-2-3-7h6z" fill="#fff" strokeWidth="2" /></StatusIcon>
        <StatusIcon label="Processos em segundo plano"><circle cx="20" cy="20" r="11" stroke="#777" strokeWidth="5" strokeDasharray="5 4" /></StatusIcon>
        <IconButton label="Filtro" className="w-[14px]"><Ico w={13} h={13}><path d="M5 6h29L24 20v15l-7-5V20z" fill="#ddd" stroke="#444" strokeWidth="3" /></Ico></IconButton>
        <span className="text-[#555]">:0</span>
      </div>
    </footer>
  );
}

export default function App() {
  return (
    <div className="relative flex h-screen flex-col overflow-hidden bg-white font-['Lato','Open_Sans',sans-serif] text-[8px] leading-[12px]">
      <TitleBar />
      <RibbonTabs />
      <Ribbon />
      <OptionsBar />
      <div className="flex min-h-0 flex-1">
        <Properties />
        <View />
        <Browser />
      </div>
      <StatusBar />
      <div className="absolute right-[21px] top-[19px] flex h-[116px] w-[483px] items-center justify-center bg-[#388a97] text-center font-['Liberation_Sans',Arial,sans-serif] text-[43px] leading-[49px] text-white">
        <p>Simplificando o<br />Projeto Simplificado</p>
      </div>
    </div>
  );
}
